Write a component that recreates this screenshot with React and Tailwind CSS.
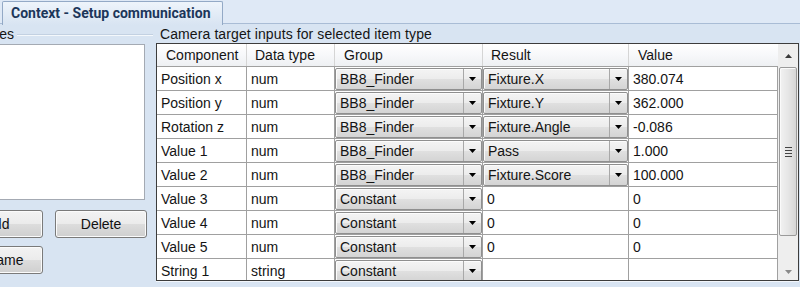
import React from "react";

const rows = [
  { c: "Position x", t: "num", g: "BB8_Finder", r: "Fixture.X", rc: true, v: "380.074" },
  { c: "Position y", t: "num", g: "BB8_Finder", r: "Fixture.Y", rc: true, v: "362.000" },
  { c: "Rotation z", t: "num", g: "BB8_Finder", r: "Fixture.Angle", rc: true, v: "-0.086" },
  { c: "Value 1", t: "num", g: "BB8_Finder", r: "Pass", rc: true, v: "1.000" },
  { c: "Value 2", t: "num", g: "BB8_Finder", r: "Fixture.Score", rc: true, v: "100.000" },
  { c: "Value 3", t: "num", g: "Constant", r: "0", rc: false, v: "0" },
  { c: "Value 4", t: "num", g: "Constant", r: "0", rc: false, v: "0" },
  { c: "Value 5", t: "num", g: "Constant", r: "0", rc: false, v: "0" },
  { c: "String 1", t: "string", g: "Constant", r: "", rc: false, v: "" },
];

function Arrow() {
  return (
    <svg width="7" height="4" viewBox="0 0 7 4">
      <path d="M0 0H7L3.5 4Z" fill="#000" />
    </svg>
  );
}

function Combo({ text }) {
  return (
    <div className="mt-px flex h-[22px] w-full rounded-[2px] border border-[#8f8f8f] bg-[linear-gradient(to_bottom,#f4f4f4_0%,#ececec_50%,#e0e0e0_50%,#d4d4d4_100%)] shadow-[inset_1px_1px_0_#fcfcfc]">
      <div className="flex flex-1 items-center overflow-hidden whitespace-nowrap pl-[4px] pt-px">{text}</div>
      <div className="flex w-[18px] items-center justify-center border-l border-[#a8a8a8]">
        <Arrow />
      </div>
    </div>
  );
}

function Btn({ children }) {
  return (
    <div className="flex h-[28px] w-[92px] shrink-0 items-center justify-center rounded-[3px] border border-[#7a7a7a] bg-[linear-gradient(to_bottom,#f3f3f3_0%,#ebebeb_50%,#dddddd_50%,#cfcfcf_100%)] pt-px text-[14px] text-[#111] shadow-[inset_0_0_0_1px_#fbfbfb]">
      {children}
    </div>
  );
}

export default function App() {
  return (
    <div className="relative h-[287px] w-[800px] overflow-hidden bg-[#d8e4f2] font-['Liberation_Sans',Arial,sans-serif] text-[14px] text-[#141414]">
      {/* tab strip */}
      <div className="flex h-[24px] border-b border-[#a9bcd5] bg-[#dfe9f6]">
        <div className="mt-px ml-[2px] -mb-px flex h-[24px] w-[221px] items-center rounded-t-[2px] border border-b-0 border-[#93a9c6] bg-[linear-gradient(to_bottom,#eef4fb_0%,#d8e4f2_100%)] pl-[8px] font-['Roboto',sans-serif] text-[14px] font-bold text-[#1c365a]">
          Context - Setup communication
        </div>
      </div>

      <div className="flex">
        {/* left group */}
        <div className="-ml-[100px] flex w-[253px] flex-col">
          <div className="flex h-[19px] items-center justify-end pt-[2px]">
            <span className="whitespace-nowrap">Item types</span>
            <div className="ml-[3px] h-[2px] w-[136px] border-t border-b border-t-[#c3d1e2] border-b-[#f4f8fc]" />
          </div>
          <div className="mt-px h-[156px] w-[245px] border border-[#a4aab3] bg-white" />
          <div className="mt-[10px] flex gap-[12px] pl-[51px]">
            <Btn>Add</Btn>
            <Btn>Delete</Btn>
          </div>
          <div className="mt-[8px] flex pl-[51px]">
            <Btn>Rename</Btn>
          </div>
        </div>

        {/* right group */}
        <div className="ml-[3px] flex flex-col">
          <div className="flex h-[19px] items-center pt-[2px] pl-[4px] whitespace-nowrap tracking-[0.1px]">
            Camera target inputs for selected item type
          </div>
          <div className="flex h-[238px] w-[643px] overflow-hidden border border-[#3c3c3c] bg-white">
            <div className="flex w-[621px] flex-col">
              {/* header */}
              <div className="flex h-[23px] shrink-0 border-b border-[#a0a0a0] bg-[linear-gradient(to_bottom,#ffffff_0%,#f7f8fa_50%,#eef0f3_100%)]">
                <div className="flex w-[90px] items-center border-r border-[#d5d5d5] pl-[9px] pt-px">Component</div>
                <div className="flex w-[88px] items-center border-r border-[#d5d5d5] pl-[8px] pt-px">Data type</div>
                <div className="flex w-[148px] items-center border-r border-[#d5d5d5] pl-[9px] pt-px">Group</div>
                <div className="flex w-[146px] items-center border-r border-[#d5d5d5] pl-[8px] pt-px">Result</div>
                <div className="flex w-[149px] items-center pl-[9px] pt-px">Value</div>
              </div>
              {rows.map((row) => (
                <div key={row.c} className="flex h-[24px] shrink-0 border-b border-[#a0a0a0]">
                  <div className="flex w-[90px] items-center border-r border-[#a0a0a0] pl-[4px] pt-[2px]">{row.c}</div>
                  <div className="flex w-[88px] items-center border-r border-[#a0a0a0] pl-[4px] pt-[2px]">{row.t}</div>
                  <div className="w-[148px] border-r border-[#a0a0a0]">
                    <Combo text={row.g} />
                  </div>
                  {row.rc ? (
                    <div className="w-[146px] border-r border-[#a0a0a0]">
                      <Combo text={row.r} />
                    </div>
                  ) : (
                    <div className="flex w-[146px] items-center border-r border-[#a0a0a0] pl-[4px] pt-[2px]">{row.r}</div>
                  )}
                  <div className="flex w-[149px] items-center border-r border-[#a0a0a0] pl-[4px] pt-[2px]">{row.v}</div>
                </div>
              ))}
            </div>
            {/* scrollbar */}
            <div className="flex w-[20px] flex-col bg-[#eeeeee]">
              <div className="flex h-[23px] shrink-0 items-center justify-center">
                <svg width="7" height="4" viewBox="0 0 7 4">
                  <path d="M0 4H7L3.5 0Z" fill="#3a3a3a" />
                </svg>
              </div>
              <div className="mx-px flex h-[169px] shrink-0 items-center justify-center rounded-[2px] border border-[#9a9a9a] bg-[linear-gradient(to_right,#f2f2f2_0%,#e6e6e6_50%,#d6d6d6_100%)] shadow-[inset_1px_1px_0_#fafafa]">
                <div className="flex flex-col gap-[2px]">
                  <div className="h-px w-[7px] bg-[#444]" />
                  <div className="h-px w-[7px] bg-[#444]" />
                  <div className="h-px w-[7px] bg-[#444]" />
                  <div className="h-px w-[7px] bg-[#444]" />
                </div>
              </div>
              <div className="flex-1" />
              <div className="flex h-[16px] shrink-0 items-center justify-center">
                <svg width="7" height="4" viewBox="0 0 7 4">
                  <path d="M0 0H7L3.5 4Z" fill="#8a8a8a" />
                </svg>
              </div>
            </div>
          </div>
          <div className="h-px w-[643px] bg-[#f2f6fb]" />
        </div>
      </div>
    </div>
  );
}
